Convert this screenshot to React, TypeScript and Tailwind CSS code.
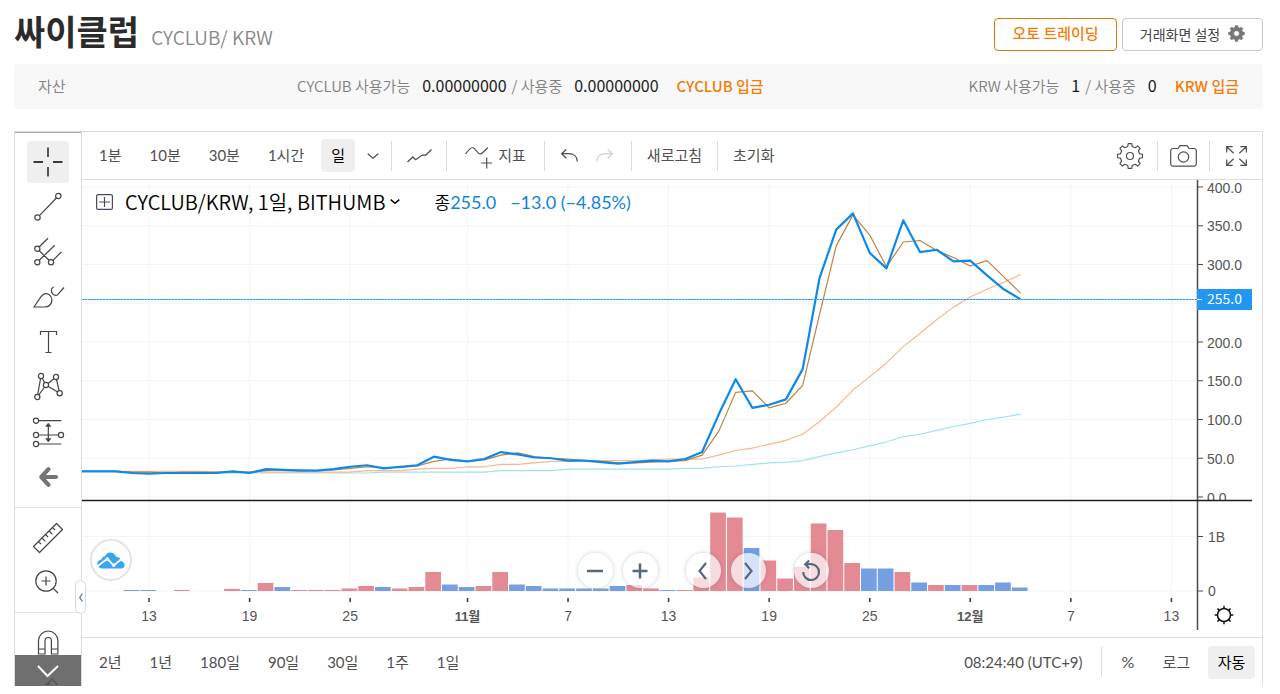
import { ReactNode } from "react";

type IconProps = {
  width?: number;
  height?: number;
  strokeWidth?: number;
  children: ReactNode;
};

type ButtonProps = {
  label: string;
  active?: boolean;
  children: ReactNode;
};

// 2021-10-09 ... 2021-12-04, one value per day
const closePrices = [
  33, 33, 33, 31, 30, 31, 31, 31, 31, 33, 31, 36, 35, 34, 34, 36, 39, 41, 37, 39, 41, 52, 48, 46, 49,
  58, 55, 51, 50, 47, 47, 45, 43, 45, 47, 46, 49, 58, 107, 152, 115, 119, 126, 165, 282, 345, 366,
  315, 295, 357, 316, 319, 304, 305, 286, 268, 255,
];
const fastAverage = [
  33, 33, 33, 32, 32, 31, 32, 32, 32, 32, 32, 34, 35, 35, 34, 35, 37, 39, 38, 38, 40, 46, 49, 46, 48,
  54, 57, 52, 50, 49, 47, 46, 44, 44, 45, 46, 47, 54, 85, 135, 137, 115, 121, 144, 235, 324, 364,
  338, 297, 329, 331, 318, 309, 298, 305, 284, 263,
];
const middleAverage = [
  33, 33, 33, 33, 33, 33, 33, 33, 32, 32, 32, 32, 32, 32, 32, 32, 32, 34, 34, 34, 36, 37, 37, 39, 39,
  42, 42, 44, 46, 46, 47, 47, 47, 47, 48, 49, 49, 49, 54, 60, 63, 68, 73, 81, 97, 116, 138, 155, 173,
  194, 211, 229, 245, 258, 268, 277, 287,
];
const slowAverage = [
  33, 33, 33, 32, 32, 32, 32, 32, 31, 31, 31, 31, 31, 31, 31, 31, 31, 31, 32, 32, 32, 32, 32, 32, 32,
  34, 34, 34, 34, 36, 36, 36, 36, 36, 36, 36, 37, 37, 39, 40, 42, 44, 45, 47, 52, 57, 61, 66, 71, 78,
  81, 86, 91, 95, 100, 103, 107,
];

// volume in millions, negative on falling days
const volumes = [
  0, 0, 0, -18, -18, 0, 18, 0, 0, 40, -18, 147, -73, 18, 18, 18, 46, 92, -73, 46, 73, 349, -119, -73,
  92, 349, -119, -92, -46, -46, -46, -46, -92, 110, 46, -18, 18, 248, 1440, 1349, -789, 560, 229, 440,
  1239, 1119, 514, -413, -413, 349, -156, 110, -110, 110, -110, -156, -64,
];

const priceTicks = [400, 350, 300, 250, 200, 150, 100, 50, 0];
const dateTicks = [
  { day: 4, label: "13" },
  { day: 10, label: "19" },
  { day: 16, label: "25" },
  { day: 23, label: "11월", bold: true },
  { day: 29, label: "7" },
  { day: 35, label: "13" },
  { day: 41, label: "19" },
  { day: 47, label: "25" },
  { day: 53, label: "12월", bold: true },
  { day: 59, label: "7" },
  { day: 65, label: "13" },
];

const axisX = 1115;
const dayToX = (day: number) => day * 16.76;
const priceToY = (price: number) => 317 - price * 0.775;
const volumeToY = (volume: number) => 411 - Math.abs(volume) * 0.0545;

const toPoints = (values: number[]) =>
  values.map((value, day) => `${dayToX(day)},${priceToY(value)}`).join(" ");

// closed outline of a cog wheel with its centre at 0,0
function gearPath(outer: number, inner: number) {
  const teeth = 8;
  const step = (Math.PI * 2) / teeth;
  const points: string[] = [];
  for (let i = 0; i < teeth; i++) {
    const angle = i * step - Math.PI / 2;
    [
      [inner, -0.29],
      [outer, -0.18],
      [outer, 0.18],
      [inner, 0.29],
    ].forEach(([r, shift]) => {
      const a = angle + shift * step;
      points.push(`${(Math.cos(a) * r).toFixed(2)} ${(Math.sin(a) * r).toFixed(2)}`);
    });
  }
  return `M${points.join("L")}Z`;
}

function Icon({ width = 30, height = 30, strokeWidth = 1, children }: IconProps) {
  return (
    <svg
      width={width}
      height={height}
      viewBox={`0 0 ${width} ${height}`}
      fill="none"
      stroke="currentColor"
      strokeWidth={strokeWidth}
      className="shrink-0 overflow-visible"
      aria-hidden="true"
    >
      {children}
    </svg>
  );
}

function ToolButton({ label, active, children }: ButtonProps) {
  return (
    <button
      type="button"
      aria-label={label}
      className={
        active
          ? "flex h-[42px] w-[42px] shrink-0 items-center justify-center rounded bg-[#efefef] text-black"
          : "flex h-[42px] w-[42px] shrink-0 items-center justify-center rounded text-[#444]"
      }
    >
      {children}
    </button>
  );
}

function RoundButton({ label, children }: ButtonProps) {
  return (
    <button
      type="button"
      aria-label={label}
      className="flex h-[35px] w-[35px] items-center justify-center rounded-full bg-white/70 text-[#56697a] shadow-[0_0_4px_rgba(90,110,130,0.35)]"
    >
      {children}
    </button>
  );
}

function Divider() {
  return <span className="h-[30px] w-px shrink-0 bg-[#dcdcdc]" />;
}

function Header() {
  return (
    <header className="flex h-16 items-end justify-between pb-[13px]">
      <h1 className="flex items-baseline gap-3 leading-7">
        <span className="text-[34px] font-bold text-[#2b2b2b]">싸이클럽</span>
        <span className="text-[19px] font-[350] text-[#888]">CYCLUB/ KRW</span>
      </h1>
      <div className="flex gap-[5px]">
        <button
          type="button"
          className="h-[33px] w-[123px] rounded border border-[#e8740c] pb-0.5 text-[15px] font-medium text-[#f57c0a]"
        >
          오토 트레이딩
        </button>
        <button
          type="button"
          className="flex h-[33px] w-[141px] items-center justify-center gap-2 rounded border border-[#c8c8c8] pb-0.5 text-sm text-[#444]"
        >
          거래화면 설정
          <svg width="17" height="17" viewBox="-8.5 -8.5 17 17" aria-hidden="true">
            <path
              d={gearPath(8, 6.3) + "M2.8 0A2.8 2.8 0 1 0-2.8 0A2.8 2.8 0 1 0 2.8 0Z"}
              fill="#777"
              fillRule="evenodd"
              stroke="#777"
              strokeWidth="0.6"
              strokeLinejoin="round"
            />
          </svg>
        </button>
      </div>
    </header>
  );
}

function AssetBar() {
  return (
    <section className="flex h-[45px] items-center rounded bg-[#f8f8f8] px-6 pb-0.5 text-[15px] leading-6 font-[350] whitespace-nowrap text-[#808080]">
      <span className="w-[259px]">자산</span>
      <div className="flex items-baseline">
        <span>CYCLUB 사용가능</span>
        <span className="ml-3 text-base font-normal text-[#1a1a1a]">0.00000000</span>
        <span className="ml-[5px]">/ 사용중</span>
        <span className="ml-3 text-base font-normal text-[#1a1a1a]">0.00000000</span>
        <a href="#deposit-cyclub" className="ml-[18px] font-medium text-[#f57c0a]">
          CYCLUB 입금
        </a>
      </div>
      <div className="ml-auto flex items-baseline">
        <span>KRW 사용가능</span>
        <span className="ml-3 text-base font-normal text-[#1a1a1a]">1</span>
        <span className="ml-[5px]">/ 사용중</span>
        <span className="ml-3 text-base font-normal text-[#1a1a1a]">0</span>
        <a href="#deposit-krw" className="ml-[18px] font-medium text-[#f57c0a]">
          KRW 입금
        </a>
      </div>
    </section>
  );
}

function DrawingTools() {
  return (
    <aside className="relative flex w-[67px] shrink-0 flex-col items-center border-r border-[#dcdcdc]">
      <span className="h-px w-full bg-[#aaa]" />
      <div className="flex flex-col gap-[3px] pt-2 pb-[9px]">
        <ToolButton label="십자선" active>
          <Icon strokeWidth={1.3}>
            <path d="M15 .5V10M15 20v9.500M.5 15H10M20 15h9.500" />
          </Icon>
        </ToolButton>
        <ToolButton label="추세선">
          <Icon strokeWidth={1.2}>
            <path d="M6.400 23.600 23.400 6" />
            <circle cx="4.500" cy="25.500" r="2.700" />
            <circle cx="25.300" cy="4" r="2.700" />
          </Icon>
        </ToolButton>
        <ToolButton label="피치포크">
          <Icon strokeWidth={1.2}>
            <path d="m6.300 9.700 8.700-8.400M6.300 23.300l15.400-15M20 23.300l8.300-8.300M6.300 13.700l9.700 9.600" />
            <circle cx="4.300" cy="11.700" r="2.600" />
            <circle cx="4.300" cy="25.300" r="2.600" />
            <circle cx="18" cy="25.300" r="2.600" />
          </Icon>
        </ToolButton>
        <ToolButton label="브러시">
          <Icon strokeWidth={1.2}>
            <path d="M1 25 8 14.600c2.200-3 5.300-3.700 8-2 3.700 2.600 3.700 7.600 1 10.400-1.400 1.400-3 2-5 2Z" />
            <path d="M20.700 5C17.600 6.400 17.800 10 20 12.200c1.800 1.800 3.700 1.500 5 .1l6-6.800" />
          </Icon>
        </ToolButton>
        <ToolButton label="텍스트">
          <Icon strokeWidth={1.2}>
            <path d="M7.500 8V4.500h16V8M15.500 4.500v21M12.500 25.500h6" />
          </Icon>
        </ToolButton>
        <ToolButton label="패턴">
          <Icon strokeWidth={1.2}>
            <path d="M4.300 25 8 4l5 9 10-8 3.700 16.300L13 13Z" />
            <g fill="#fff">
              <circle cx="8" cy="4" r="2.600" />
              <circle cx="23" cy="5" r="2.600" />
              <circle cx="13" cy="13" r="2.600" />
              <circle cx="4.300" cy="25" r="2.600" />
              <circle cx="26.700" cy="21.300" r="2.600" />
            </g>
          </Icon>
        </ToolButton>
        <ToolButton label="예측">
          <Icon strokeWidth={1.2}>
            <path d="M5.700 3.700h22.600M5.700 18h19.600M5.700 27h22.600M15.300 7v17" />
            <path d="M15.300 6l2.700 3.500h-5.400zM15.300 25l2.700-3.500h-5.400z" fill="currentColor" strokeWidth="0.5" />
            <circle cx="3" cy="3.700" r="2.600" />
            <circle cx="3" cy="18" r="2.600" />
            <circle cx="28" cy="18" r="2.600" />
            <circle cx="3" cy="27" r="2.600" />
          </Icon>
        </ToolButton>
        <ToolButton label="뒤로">
          <Icon>
            <path
              d="M15.500 7.200 8.300 15l7.200 7.800M9 15h14"
              stroke="#747474"
              strokeWidth="4.200"
              strokeLinecap="round"
              strokeLinejoin="round"
            />
          </Icon>
        </ToolButton>
      </div>
      <span className="h-px w-full shrink-0 bg-[#dfe2ea]" />
      <div className="flex flex-col gap-0.5 py-[9px]">
        <ToolButton label="측정">
          <Icon strokeWidth={1.2}>
            <path
              d="M.5 23.500 23.500.5l6 6-23 23ZM5.500 18.500l2.600 2.600M9 15l3.400 3.400M12.500 11.500l2.600 2.600M16 8l3.400 3.400M19.500 4.500l2.600 2.600"
              strokeLinejoin="round"
            />
          </Icon>
        </ToolButton>
        <ToolButton label="확대">
          <Icon strokeWidth={1.2}>
            <circle cx="13" cy="14" r="10.200" />
            <path d="m20.300 21.300 4.700 4.700M13 9.500v9M8.500 14h9" />
          </Icon>
        </ToolButton>
      </div>
      <span className="h-px w-full shrink-0 bg-[#dfe2ea]" />
      <div className="flex flex-col pt-[9px]">
        <ToolButton label="자석 모드">
          <Icon strokeWidth={1.2}>
            <path d="M5.500 26V12.700a9.700 9.700 0 0 1 19.400 0V26h-6.500V12.700a3.200 3.200 0 0 0-6.400 0V26ZM5.500 21H12M18.400 21h6.500" />
          </Icon>
        </ToolButton>
        <span className="flex h-[21px] justify-center overflow-hidden pt-3 text-[#444]">
          <Icon strokeWidth={1.2}>
            <path d="m4 17 15-14 5 5L10 22M8 16l9-9M11 19l9-9" />
          </Icon>
        </span>
      </div>
      <button
        type="button"
        aria-label="도구 더 보기"
        className="absolute inset-x-0 bottom-0 flex h-[31px] items-center justify-center bg-[#555]/85 text-white"
      >
        <Icon width={22} height={12} strokeWidth={2}>
          <path d="m1 1 9.500 10L21 1" />
        </Icon>
      </button>
      <button
        type="button"
        aria-label="도구 모음 숨기기"
        className="absolute top-[448px] -right-[5px] z-10 flex h-[34px] w-[11px] items-center justify-center rounded-full border border-[#d3d9e2] bg-white text-[#4f7089]"
      >
        <Icon width={4} height={9} strokeWidth={1.2}>
          <path d="M3.500.5.700 4.500l2.800 4" />
        </Icon>
      </button>
    </aside>
  );
}

function TopToolbar() {
  return (
    <div className="flex h-12 items-center border-b border-[#dcdcdc] text-[15px] whitespace-nowrap text-[#505050]">
      <div className="flex gap-7 pl-[17px]">
        <button type="button">1분</button>
        <button type="button">10분</button>
        <button type="button">30분</button>
        <button type="button">1시간</button>
      </div>
      <button
        type="button"
        className="ml-[17px] h-[33px] w-[34px] rounded-sm bg-[#efefef] text-black"
      >
        일
      </button>
      <button type="button" aria-label="주기 선택" className="mx-3">
        <Icon width={12} height={6} strokeWidth={1.2}>
          <path d="m.7.7 5.300 4.600L11.300.7" />
        </Icon>
      </button>
      <Divider />
      <button type="button" aria-label="차트 유형" className="mr-3.5 ml-[15px]">
        <Icon width={25} height={14} strokeWidth={1.3}>
          <path d="m.5 13 5.300-5 2.800 2.700 6.300-4.400 4-.3 5.600-5.500" />
        </Icon>
      </button>
      <Divider />
      <button type="button" className="mx-[18px] flex items-center gap-[5px]">
        <Icon width={28} height={20} strokeWidth={1.2}>
          <path d="M.5 8C4 3.500 5.500 1.500 7.500 1.500S13 8 15.300 8c1.700 0 3.500-2.500 7.500-6.500M21.700 11.500v11M16.200 17h11" />
        </Icon>
        지표
      </button>
      <Divider />
      <button type="button" aria-label="실행 취소" className="ml-4">
        <Icon width={17} height={13} strokeWidth={1.3}>
          <path d="M5.300.5.700 4.700l4.600 4.600M.7 4.700h6.800c5.200 0 8.800 3 8.800 7.800" />
        </Icon>
      </button>
      <button type="button" aria-label="다시 실행" className="mx-[18px] text-[#d0d0d0]">
        <Icon width={17} height={13} strokeWidth={1.3}>
          <path d="m11.700.5 4.600 4.200-4.600 4.600M16.300 4.700H9.500C4.300 4.700.7 7.700.7 12.500" />
        </Icon>
      </button>
      <Divider />
      <button type="button" className="mx-[15px]">
        새로고침
      </button>
      <Divider />
      <button type="button" className="ml-[15px]">
        초기화
      </button>
      <div className="ml-auto flex items-center">
        <button type="button" aria-label="설정">
          <svg
            width="28"
            height="28"
            viewBox="-14 -14 28 28"
            fill="none"
            stroke="currentColor"
            strokeWidth="1.200"
            strokeLinejoin="round"
            aria-hidden="true"
          >
            <path d={gearPath(12.6, 9.8)} />
            <circle r="3.500" />
          </svg>
        </button>
        <span className="w-[13px]" />
        <Divider />
        <button type="button" aria-label="스냅샷" className="mx-3">
          <Icon width={27} height={22} strokeWidth={1.2}>
            <path d="M3 3.500h5L10 .700h7l2 2.800h5a2.300 2.300 0 0 1 2.300 2.300v13a2.300 2.300 0 0 1-2.300 2.300H3A2.300 2.300 0 0 1 .7 18.800v-13A2.300 2.300 0 0 1 3 3.500Z" />
            <circle cx="13.500" cy="12" r="5.200" />
          </Icon>
        </button>
        <Divider />
        <button type="button" aria-label="전체 화면" className="mr-[15px] ml-4">
          <Icon width={21} height={20} strokeWidth={1.2}>
            <path d="M.7 6.500V.7h6M.7.7l7 6.500M14.300.7h6v5.800M20.300.7l-7 6.500M.7 13.500v5.800h6M.7 19.300l7-6.500M14.300 19.300h6v-5.800M20.300 19.300l-7-6.500" />
          </Icon>
        </button>
      </div>
    </div>
  );
}

function PriceChart() {
  return (
    <svg
      viewBox="0 0 1180 457"
      className="block w-full font-['Liberation_Sans','Noto_Sans_CJK_KR',sans-serif] text-[14px]"
      role="img"
      aria-label="CYCLUB/KRW 일봉 차트"
    >
      <defs>
        <clipPath id="price-pane">
          <rect width="1180" height="320" />
        </clipPath>
      </defs>

      {/* Grid */}
      <g stroke="#f0f5f9">
        {dateTicks.map(({ day }) => (
          <line key={day} x1={dayToX(day)} x2={dayToX(day)} y1="2" y2="411" />
        ))}
        {priceTicks.map((price) => (
          <line key={price} x1="0" x2={axisX} y1={priceToY(price)} y2={priceToY(price)} />
        ))}
        <line x1="0" x2={axisX} y1={volumeToY(1000)} y2={volumeToY(1000)} />
        <line x1="0" x2={axisX} y1="411" y2="411" />
      </g>

      {/* Volume */}
      {volumes.map((volume, day) => (
        <rect
          key={day}
          x={dayToX(day) - 8.7}
          y={volumeToY(volume)}
          width="15.700"
          height={411 - volumeToY(volume)}
          fill={volume > 0 ? "#e48a93" : "#769fe3"}
        />
      ))}

      {/* Averages and price */}
      <g fill="none" strokeLinejoin="round">
        <polyline points={toPoints(slowAverage)} stroke="#9fe3ec" strokeWidth="1.200" />
        <polyline points={toPoints(middleAverage)} stroke="#f9b78b" strokeWidth="1.200" />
        <polyline points={toPoints(fastAverage)} stroke="#bf813f" strokeWidth="1.200" />
        <polyline points={toPoints(closePrices)} stroke="#0c8aea" strokeWidth="2.200" />
      </g>
      <line x1="0" x2={axisX} y1="119.500" y2="119.500" stroke="#8fcaf5" />
      <line x1="0" x2={axisX} y1="119.500" y2="119.500" stroke="#2196f3" strokeDasharray="2 1" />

      {/* Price scale */}
      <g clipPath="url(#price-pane)">
        {priceTicks.map((price) => (
          <g key={price}>
            <line x1={axisX} x2={axisX + 6} y1={priceToY(price)} y2={priceToY(price)} stroke="#4a4a55" />
            {price !== 250 && (
              <text x="1125" y={priceToY(price) + 5.5} fill="#555">
                {price.toFixed(1)}
              </text>
            )}
          </g>
        ))}
      </g>
      <g stroke="#4a4a55" fill="#555">
        <line x1={axisX} x2={axisX + 6} y1={volumeToY(1000)} y2={volumeToY(1000)} />
        <line x1={axisX} x2={axisX + 6} y1="411" y2="411" />
        <text x="1126" y={volumeToY(1000) + 5} stroke="none">
          1B
        </text>
        <text x="1126" y="416" stroke="none">
          0
        </text>
        <line x1={axisX + 0.5} x2={axisX + 0.5} y1="0" y2="450" strokeWidth="1.500" />
      </g>
      <rect x={axisX} y="109" width="55" height="21" fill="#2196f3" />
      <line x1={axisX} x2={axisX + 5} y1="119.500" y2="119.500" stroke="#fff" />
      <text x="1125" y="124" fill="#fff" className="font-['Noto_Sans_CJK_KR',sans-serif]">
        255.0
      </text>
      <line x1="0" x2="1170" y1="320.500" y2="320.500" stroke="#1c1c28" strokeWidth="1.300" />

      {/* Time scale */}
      {dateTicks.map(({ day, label, bold }) => (
        <g key={day}>
          <line x1={dayToX(day)} x2={dayToX(day)} y1="418" y2="422" stroke="#333" strokeWidth="1.500" />
          <text
            x={dayToX(day)}
            y="441"
            textAnchor="middle"
            fill="#555"
            className={bold ? "text-[13px] font-bold" : ""}
          >
            {label}
          </text>
        </g>
      ))}
      <g transform="translate(1142 435)" stroke="#111" strokeWidth="1.500" fill="none">
        <circle r="6.500" />
        {[0, 45, 90, 135, 180, 225, 270, 315].map((angle) => (
          <line key={angle} y1="-6.500" y2="-9.300" transform={`rotate(${angle})`} />
        ))}
      </g>
    </svg>
  );
}

function ChartLegend() {
  return (
    <div className="absolute top-2 left-3.5 flex items-center leading-7 font-[350] whitespace-nowrap text-black">
      <button type="button" aria-label="범례 펼치기" className="mr-3 text-[#4a4a5e]">
        <Icon width={17} height={16} strokeWidth={1.2}>
          <rect x=".6" y=".6" width="15.800" height="14.800" rx="1.500" />
          <path d="M8.500 3v10M3 8h11" />
        </Icon>
      </button>
      <button type="button" className="flex items-center gap-[5px] text-[20px]">
        CYCLUB/KRW, 1일, BITHUMB
        <Icon width={10} height={6} strokeWidth={1.5}>
          <path d="m.7.7 4.300 3.600L9.300.7" />
        </Icon>
      </button>
      <span className="ml-[34px] text-[17px]">종</span>
      <span className="flex gap-3.5 font-['Lato',sans-serif] text-lg font-normal text-[#0f84dc]">
        <span>255.0</span>
        <span>−13.0 (−4.85%)</span>
      </span>
    </div>
  );
}

function ChartControls() {
  return (
    <div className="absolute bottom-[49px] left-[42%] flex gap-7">
      <div className="flex gap-2.5">
        <RoundButton label="축소">
          <Icon width={16} height={16} strokeWidth={2.5}>
            <path d="M0 8h16" />
          </Icon>
        </RoundButton>
        <RoundButton label="확대">
          <Icon width={16} height={16} strokeWidth={2.5}>
            <path d="M.5 8h15M8 .5v15" />
          </Icon>
        </RoundButton>
      </div>
      <div className="flex gap-2.5">
        <RoundButton label="왼쪽으로">
          <Icon width={10} height={18} strokeWidth={2.2}>
            <path d="M8 1 1.500 9 8 17" />
          </Icon>
        </RoundButton>
        <RoundButton label="오른쪽으로">
          <Icon width={10} height={18} strokeWidth={2.2}>
            <path d="m2 1 6.500 8L2 17" />
          </Icon>
        </RoundButton>
      </div>
      <RoundButton label="차트 초기화">
        <Icon width={18} height={22} strokeWidth={2.2}>
          <path d="M1.200 12A7.900 7.900 0 1 0 9 4.200H3.500M7.200.5 3.200 4.200 7.200 8.200" />
        </Icon>
      </RoundButton>
    </div>
  );
}

function BottomToolbar() {
  return (
    <div className="flex h-[49px] items-center border-t border-[#dcdcdc] text-[15px] whitespace-nowrap text-[#505050]">
      <div className="flex gap-7 pl-[17px]">
        <button type="button">2년</button>
        <button type="button">1년</button>
        <button type="button">180일</button>
        <button type="button">90일</button>
        <button type="button">30일</button>
        <button type="button">1주</button>
        <button type="button">1일</button>
      </div>
      <div className="ml-auto flex items-center pr-[7px]">
        <button type="button" className="mr-[18px]">
          08:24:40 (UTC+9)
        </button>
        <Divider />
        <button type="button" className="mx-5 text-base">
          %
        </button>
        <button type="button" className="mr-[18px] ml-2">
          로그
        </button>
        <button type="button" className="h-[33px] w-[47px] rounded-sm bg-[#efefef] text-black">
          자동
        </button>
      </div>
    </div>
  );
}

function App() {
  return (
    <main className="min-h-screen bg-white pr-[17px] pl-3.5 font-['Noto_Sans_CJK_KR',sans-serif]">
      <Header />
      <AssetBar />
      <div className="mt-[22px] flex border-x border-t border-[#dcdcdc]">
        <DrawingTools />
        <div className="min-w-0 flex-1 font-['Lato','Noto_Sans_CJK_KR',sans-serif]">
          <TopToolbar />
          <div className="relative font-['Noto_Sans_CJK_KR',sans-serif]">
            <PriceChart />
            <ChartLegend />
            <a
              href="#tradingview"
              aria-label="TradingView"
              className="absolute bottom-14 left-2 flex h-[42px] w-[42px] items-center justify-center rounded-full border-2 border-[#e3e3e3] bg-white"
            >
              <svg width="28" height="17" viewBox="0 0 28 17" fill="none" aria-hidden="true">
                <path
                  d="M5 16.500C2 16.500.3 14.300.3 12c0-2.500 1.700-4.200 4-4.500.7-2 2-3 3.700-3.200C9 1.800 10.800.5 13 .5c3 0 5.300 1.700 6 4.300 2.900.1 5.200 2 5.500 4.400 2 .5 3.200 2 3.200 3.800 0 2-1.500 3.500-3.500 3.500z"
                  fill="#37a6ef"
                />
                <path d="m.5 14.200 9.800-7.400 6.400 6.700L24.500 7" stroke="#fff" strokeWidth="1.800" />
                <circle cx="10.300" cy="7" r="1.800" fill="#fff" />
                <circle cx="16.700" cy="13.300" r="1.800" fill="#fff" />
              </svg>
            </a>
            <ChartControls />
          </div>
          <BottomToolbar />
        </div>
      </div>
    </main>
  );
}

export default App;
